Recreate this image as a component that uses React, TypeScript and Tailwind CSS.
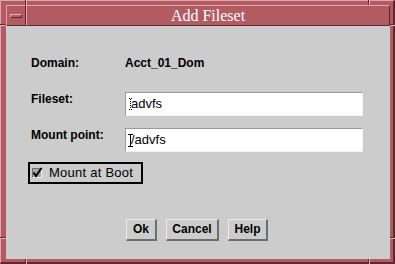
import React from "react";

function VTick({ left, top, h }: { left: number; top: number; h: number }) {
  return (
    <div
      className="absolute w-[2px] border-l border-r border-l-[#5a2a30] border-r-[#e6b0b5]"
      style={{ left, top, height: h }}
    />
  );
}
function HTick({ left, top, w }: { left: number; top: number; w: number }) {
  return (
    <div
      className="absolute h-[2px] border-t border-b border-t-[#5a2a30] border-b-[#e6b0b5]"
      style={{ left, top, width: w }}
    />
  );
}

function DottedCursor() {
  return (
    <svg className="absolute left-[3px] top-[5px]" width="3" height="12" viewBox="0 0 3 12">
      <rect x="0" y="0" width="1" height="1" fill="#000" />
      <rect x="2" y="0" width="1" height="1" fill="#000" />
      <line x1="1.5" y1="1" x2="1.5" y2="11" stroke="#000" strokeWidth="1" strokeDasharray="1 1" />
      <rect x="0" y="11" width="1" height="1" fill="#000" />
      <rect x="2" y="11" width="1" height="1" fill="#000" />
    </svg>
  );
}

function IBeam() {
  return (
    <svg className="absolute left-[2px] top-[5px]" width="5" height="13" viewBox="0 0 5 13">
      <line x1="0" y1="0.5" x2="5" y2="0.5" stroke="#000" strokeWidth="1" />
      <line x1="2.5" y1="0" x2="2.5" y2="13" stroke="#000" strokeWidth="1" />
      <line x1="0" y1="12.5" x2="5" y2="12.5" stroke="#000" strokeWidth="1" />
    </svg>
  );
}

function TextField({ value, cursor }: { value: string; cursor: "dotted" | "ibeam" }) {
  return (
    <div className="relative w-[238px] h-[24px] bg-white border-t border-l border-t-[#9a9a9a] border-l-[#9a9a9a] border-b border-r border-b-[#f2f2f2] border-r-[#f2f2f2] flex items-center pl-[5px] text-[13px] leading-[16px] font-['Liberation_Sans',sans-serif] text-black">
      <span>{value}</span>
      {cursor === "dotted" ? <DottedCursor /> : <IBeam />}
    </div>
  );
}

function Button({ label, w }: { label: string; w: number }) {
  return (
    <div
      className="h-[22px] border-t border-l border-t-[#ececec] border-l-[#ececec] border-b-2 border-r-2 border-b-[#6e6e6e] border-r-[#6e6e6e] flex items-center justify-center pb-[2px] text-[12px] leading-[16px] font-bold text-black"
      style={{ width: w }}
    >
      {label}
    </div>
  );
}

export default function App() {
  return (
    <div className="relative w-[395px] h-[264px] bg-[#b35b63] border-t border-l border-t-[#e0a4aa] border-l-[#e0a4aa] border-b-2 border-r-2 border-b-[#5a2a30] border-r-[#5a2a30] pt-[4px] pl-[5px] pr-[3px] pb-[3px] flex flex-col">
      {/* Title bar */}
      <div className="flex h-[21px] shrink-0">
        <div className="w-[20px] h-full border-t border-l border-t-[#e0a4aa] border-l-[#e0a4aa] border-b border-r border-b-[#5a2a30] border-r-[#5a2a30] flex items-center justify-center">
          <div className="w-[12px] h-[4px] border-t border-l border-t-[#e6b0b5] border-l-[#e6b0b5] border-b border-r border-b-[#5a2a30] border-r-[#5a2a30]" />
        </div>
        <div className="flex-1 h-full border-t border-l border-t-[#e0a4aa] border-l-[#e0a4aa] border-b border-r border-b-[#5a2a30] border-r-[#5a2a30] flex items-center justify-center text-white text-[16px] leading-[18px] font-['Liberation_Serif',serif]">
          Add Fileset
        </div>
      </div>

      {/* Client area */}
      <div className="flex-1 bg-[#cccccc] flex flex-col pt-[29px] font-['Liberation_Sans',sans-serif] text-black">
        <div className="flex h-[16px] items-center text-[12px] leading-[16px] font-bold">
          <div className="w-[94px] ml-[25px]">Domain:</div>
          <div>Acct_01_Dom</div>
        </div>

        <div className="flex items-start mt-[21px]">
          <div className="w-[94px] ml-[25px] text-[12px] leading-[12px] font-bold pt-[1px]">Fileset:</div>
          <TextField value="advfs" cursor="dotted" />
        </div>

        <div className="flex items-start mt-[12px]">
          <div className="w-[94px] ml-[25px] text-[12px] leading-[12px] font-bold pt-[1px]">Mount point:</div>
          <TextField value="/advfs" cursor="ibeam" />
        </div>

        <div className="mt-[10px] ml-[22px] w-[115px] h-[22px] border-2 border-black flex items-center pl-[2px]">
          <div className="relative w-[10px] h-[10px] bg-[#a9a9a9] border-t border-l border-t-[#6e6e6e] border-l-[#6e6e6e] border-b border-r border-b-[#eeeeee] border-r-[#eeeeee]">
            <svg className="absolute left-[-1px] top-[-2px]" width="11" height="11" viewBox="0 0 11 11">
              <path d="M1.5 5.5 L4 9 L9.5 1" stroke="#000" strokeWidth="2" fill="none" />
            </svg>
          </div>
          <span className="ml-[7px] text-[13px] leading-[16px] tracking-[0.25px]">Mount at Boot</span>
        </div>

        <div className="mt-[35px] flex justify-center gap-[9px] pr-[2px]">
          <Button label="Ok" w={31} />
          <Button label="Cancel" w={53} />
          <Button label="Help" w={40} />
        </div>
      </div>

      {/* Frame corner grooves */}
      <VTick left={24} top={-1} h={5} />
      <VTick left={367} top={-1} h={5} />
      <VTick left={24} top={258} h={5} />
      <VTick left={367} top={258} h={5} />
      <HTick left={-1} top={23} w={6} />
      <HTick left={389} top={23} w={5} />
      <HTick left={-1} top={236} w={6} />
      <HTick left={389} top={236} w={5} />
    </div>
  );
}
